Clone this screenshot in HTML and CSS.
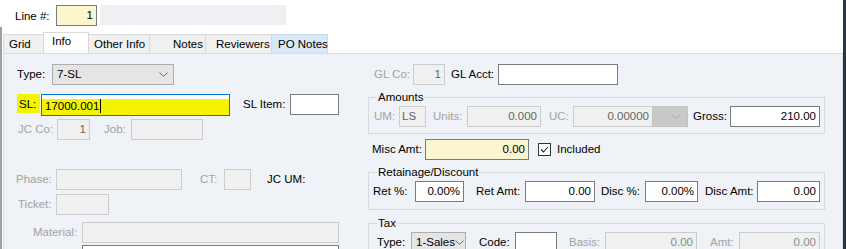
FILE: index.html
```html
<!DOCTYPE html>
<html lang="en">
<head>
    <meta charset="UTF-8">
    <meta name="viewport" content="width=device-width, initial-scale=1.0">
    <title>SL Line</title>
    <link rel="stylesheet" href="styles.css">
</head>
<body>
<div class="window">
    <!-- line number -->
    <div class="header">
        <span class="line-lbl">Line #:</span>
        <div class="box yellow num line-no">1</div>
        <div class="line-bar"></div>
    </div>

    <div class="frame">
        <div class="tabs">
            <div class="tab t-grid">Grid</div>
            <div class="tab t-info active">Info</div>
            <div class="tab t-other">Other Info</div>
            <div class="tab t-notes">Notes</div>
            <div class="tab t-rev">Reviewers</div>
            <div class="tab t-po">PO Notes</div>
        </div>

        <div class="panel">
            <!-- left column -->
            <div class="col-left">
                <div class="row r-type">
                    <span class="lbl type-lbl">Type:</span>
                    <div class="box select type-sel">7-SL<svg class="chev" width="9" height="6" viewBox="0 0 9 6"><path d="M0.5 0.5l4 4 4-4" fill="none" stroke="#6e6e6e"/></svg></div>
                </div>
                <div class="row r-sl">
                    <span class="sl-lbl"><span class="mark">SL:</span></span>
                    <div class="box focus sl-box">17000.001<span class="caret"></span></div>
                    <span class="lbl slitem-lbl">SL Item:</span>
                    <div class="box slitem-box"></div>
                </div>
                <div class="row r-jc">
                    <span class="lbl off jcco-lbl">JC Co:</span>
                    <div class="box dis num jcco-box">1</div>
                    <span class="lbl off job-lbl">Job:</span>
                    <div class="box dis job-box"></div>
                </div>
                <div class="row r-phase">
                    <span class="lbl off phase-lbl">Phase:</span>
                    <div class="box dis phase-box"></div>
                    <span class="lbl off ct-lbl">CT:</span>
                    <div class="box dis ct-box"></div>
                    <span class="lbl jcum-lbl">JC UM:</span>
                </div>
                <div class="row r-ticket">
                    <span class="lbl off ticket-lbl">Ticket:</span>
                    <div class="box dis ticket-box"></div>
                </div>
                <div class="row r-mat">
                    <span class="lbl off mat-lbl">Material:</span>
                    <div class="box dis mat-box"></div>
                </div>
                <div class="row r-desc">
                    <div class="box desc-box"></div>
                </div>
            </div>

            <!-- right column -->
            <div class="col-right">
                <div class="row r-gl">
                    <span class="lbl off glco-lbl">GL Co:</span>
                    <div class="box dis num glco-box">1</div>
                    <span class="lbl glacct-lbl">GL Acct:</span>
                    <div class="box glacct-box"></div>
                </div>

                <div class="group g-amounts">
                    <span class="group-title">Amounts</span>
                    <div class="row">
                        <span class="lbl off um-lbl">UM:</span>
                        <div class="box dis um-box">LS</div>
                        <span class="lbl off units-lbl">Units:</span>
                        <div class="box dis num units-box">0.000</div>
                        <span class="lbl off uc-lbl">UC:</span>
                        <div class="box dis num uc-box">0.00000</div>
                        <div class="uc-drop"><svg width="9" height="6" viewBox="0 0 9 6"><path d="M0.5 0.5l4 4 4-4" fill="none" stroke="#a9a9a9"/></svg></div>
                        <span class="lbl gross-lbl">Gross:</span>
                        <div class="box num gross-box">210.00</div>
                    </div>
                </div>

                <div class="row r-misc">
                    <span class="lbl misc-lbl">Misc Amt:</span>
                    <div class="box yellow num misc-box">0.00</div>
                    <span class="check"><svg width="11" height="11" viewBox="0 0 11 11"><path d="M2 5.5l2.5 2.5 4.5-5" fill="none" stroke="#222" stroke-width="1.1"/></svg></span>
                    <span class="lbl incl-lbl">Included</span>
                </div>

                <div class="group g-ret">
                    <span class="group-title">Retainage/Discount</span>
                    <div class="row">
                        <span class="lbl retp-lbl">Ret %:</span>
                        <div class="box num retp-box">0.00%</div>
                        <span class="lbl reta-lbl">Ret Amt:</span>
                        <div class="box num reta-box">0.00</div>
                        <span class="lbl discp-lbl">Disc %:</span>
                        <div class="box num discp-box">0.00%</div>
                        <span class="lbl disca-lbl">Disc Amt:</span>
                        <div class="box num disca-box">0.00</div>
                    </div>
                </div>

                <div class="group g-tax">
                    <span class="group-title">Tax</span>
                    <div class="row">
                        <span class="lbl taxtype-lbl">Type:</span>
                        <div class="box select taxtype-sel">1-Sales<svg class="chev" width="9" height="6" viewBox="0 0 9 6"><path d="M0.5 0.5l4 4 4-4" fill="none" stroke="#6e6e6e"/></svg></div>
                        <span class="lbl code-lbl">Code:</span>
                        <div class="box code-box"></div>
                        <span class="lbl off basis-lbl">Basis:</span>
                        <div class="box dis num soft basis-box">0.00</div>
                        <span class="lbl off amt-lbl">Amt:</span>
                        <div class="box dis num soft amt-box">0.00</div>
                    </div>
                </div>
            </div>
        </div>
    </div>
</div>
</body>
</html>
```
FILE: styles.css
```css
* {
    box-sizing: border-box;
}
body {
    margin: 0;
    font-family: "Liberation Sans", Arial, sans-serif;
    font-size: 11.5px;
    color: #000;
    background-color: #fff;
}
.window {
    width: 846px;
    height: 249px;
    overflow: hidden;
    border-right: 3px solid #2b3640;
}

/* 顶部 Line # */
.header {
    height: 27px;
    display: flex;
    padding: 5px 0 0 15px;
}
.line-lbl {
    width: 41px;
    line-height: 22px;
}
.line-no {
    width: 41px;
    height: 22px;
}
.line-bar {
    width: 186px;
    height: 20px;
    margin-left: 3px;
    background-color: #eef0f4;
}

.frame {
    height: 222px;
    border-left: 2px solid #9ba1a8;
    padding-left: 1px;
}

/* 选项卡 */
.tabs {
    height: 26px;
    display: flex;
    align-items: flex-end;
}
.tab {
    height: 19px;
    line-height: 19px;
    margin-right: -1px;
    border: 1px solid #d9d9d9;
    border-bottom: none;
    background-color: #f0f0f0;
    white-space: nowrap;
}
.tab.active {
    height: 21px;
    line-height: 17px;
    background-color: #fff;
    position: relative;
}
.t-grid { width: 41px; padding-left: 5px; }
.t-info { width: 46px; padding-left: 8px; }
.t-other { width: 62px; padding-left: 5px; }
.t-notes { width: 57px; text-align: right; padding-right: 2px; }
.t-rev { width: 67px; padding-left: 10px; }
.t-po {
    width: 57px;
    padding-left: 6px;
    background-color: #d9e8f7;
    border-color: #cadcee;
}

.panel {
    height: 196px;
    display: flex;
    background-color: #eff2f6;
    border: 1px solid #d9dce0;
    border-bottom: none;
}
.col-left {
    width: 364px;
}
.col-right {
    width: 457px;
}

.row {
    display: flex;
    height: 21px;
}
.lbl {
    line-height: 21px;
    white-space: nowrap;
}
.lbl.off {
    color: #a3a3a3;
}

/* 输入框 */
.box {
    height: 21px;
    line-height: 19px;
    padding: 0 3px;
    background-color: #fff;
    border: 1px solid #7a7a7a;
    white-space: nowrap;
    overflow: hidden;
}
.box.num {
    text-align: right;
}
.box.yellow {
    background-color: #fbf6cd;
}
.box.dis {
    background-color: #f0f0f0;
    border-color: #cccccc;
    color: #666;
}
.box.soft {
    color: #8c8c8c;
}
.box.select {
    display: flex;
    align-items: center;
    justify-content: space-between;
    padding: 0 5px 0 4px;
    background-color: #e5e5e5;
    border-color: #adadad;
}
.chev {
    flex-shrink: 0;
}
.box.focus {
    border-color: #0078d7;
}

/* 左列 */
.r-type { margin-top: 10px; }
.type-lbl { margin-left: 13px; width: 35px; }
.type-sel { width: 122px; }

.r-sl { margin-top: 9px; height: 22px; }
.sl-lbl { margin-left: 13px; width: 24px; }
.mark {
    display: block;
    width: 23px;
    height: 19px;
    line-height: 20px;
    padding-left: 2px;
    background-color: #f4f400;
}
.sl-box {
    width: 189px;
    height: 22px;
    line-height: 22px;
    background: linear-gradient(to bottom, #fff 4px, #f4f400 4px);
    border-bottom-color: #7ab000;
}
.caret {
    display: inline-block;
    width: 1px;
    height: 14px;
    margin-left: 1px;
    vertical-align: -3px;
    background-color: #000;
}
.slitem-lbl { margin-left: 13px; width: 47px; }
.slitem-box { width: 49px; }

.r-jc { margin-top: 3px; }
.jcco-lbl { margin-left: 14px; width: 39px; }
.jcco-box { width: 33px; }
.job-lbl { margin-left: 14px; width: 27px; }
.job-box { width: 72px; }

.r-phase { margin-top: 29px; }
.phase-lbl { margin-left: 12px; width: 40px; }
.phase-box { width: 126px; }
.ct-lbl { margin-left: 18px; width: 24px; }
.ct-box { width: 27px; }
.jcum-lbl { margin-left: 16px; }

.r-ticket { margin-top: 4px; }
.ticket-lbl { margin-left: 14px; width: 38px; }
.ticket-box { width: 53px; }

.r-mat { margin-top: 7px; }
.mat-lbl { margin-left: 29px; width: 49px; }
.mat-box { width: 257px; }

.r-desc { margin-top: 2px; }
.desc-box { margin-left: 78px; width: 257px; }

/* 右列 */
.r-gl { margin-top: 10px; }
.glco-lbl { margin-left: 6px; width: 39px; }
.glco-box { width: 32px; }
.glacct-lbl { margin-left: 6px; width: 47px; }
.glacct-box { width: 120px; }

.group {
    position: relative;
    width: 457px;
    border: 1px solid #d6dade;
    padding: 8px 0 6px;
}
.group-title {
    position: absolute;
    top: -8px;
    left: 8px;
    padding: 0 1px;
    line-height: 14px;
    background-color: #eff2f6;
}
.g-amounts { margin-top: 12px; }
.um-lbl { margin-left: 5px; width: 25px; }
.um-box { width: 27px; padding-left: 2px; }
.units-lbl { margin-left: 7px; width: 34px; }
.units-box { width: 74px; }
.uc-lbl { margin-left: 8px; width: 24px; }
.uc-box { width: 79px; border-right: none; }
.uc-drop {
    width: 36px;
    height: 21px;
    display: flex;
    align-items: center;
    justify-content: flex-end;
    padding-right: 7px;
    background-color: #c9c9c9;
    border: 1px solid #c3c3c3;
}
.gross-lbl { margin-left: 5px; width: 37px; }
.gross-box { width: 90px; }

.r-misc { margin-top: 5px; align-items: center; }
.misc-lbl { margin-left: 4px; width: 53px; }
.misc-box { width: 104px; }
.check {
    width: 13px;
    height: 13px;
    margin-left: 9px;
    display: flex;
    align-items: center;
    justify-content: center;
    background-color: #fff;
    border: 1px solid #333;
}
.incl-lbl { margin-left: 6px; }

.g-ret { margin-top: 12px; padding-bottom: 7px; }
.retp-lbl { margin-left: 4px; width: 42px; }
.retp-box { width: 49px; }
.reta-lbl { margin-left: 12px; width: 49px; }
.reta-box { width: 70px; }
.discp-lbl { margin-left: 6px; width: 44px; }
.discp-box { width: 53px; }
.disca-lbl { margin-left: 7px; width: 52px; }
.disca-box { width: 63px; }

.g-tax { margin-top: 13px; }
.taxtype-lbl { margin-left: 8px; width: 34px; }
.taxtype-sel { width: 55px; padding: 0 2px 0 4px; }
.code-lbl { margin-left: 13px; width: 36px; }
.code-box { width: 42px; }
.basis-lbl { margin-left: 12px; width: 36px; }
.basis-box { width: 92px; }
.amt-lbl { margin-left: 13px; width: 29px; }
.amt-box { width: 81px; }
```
